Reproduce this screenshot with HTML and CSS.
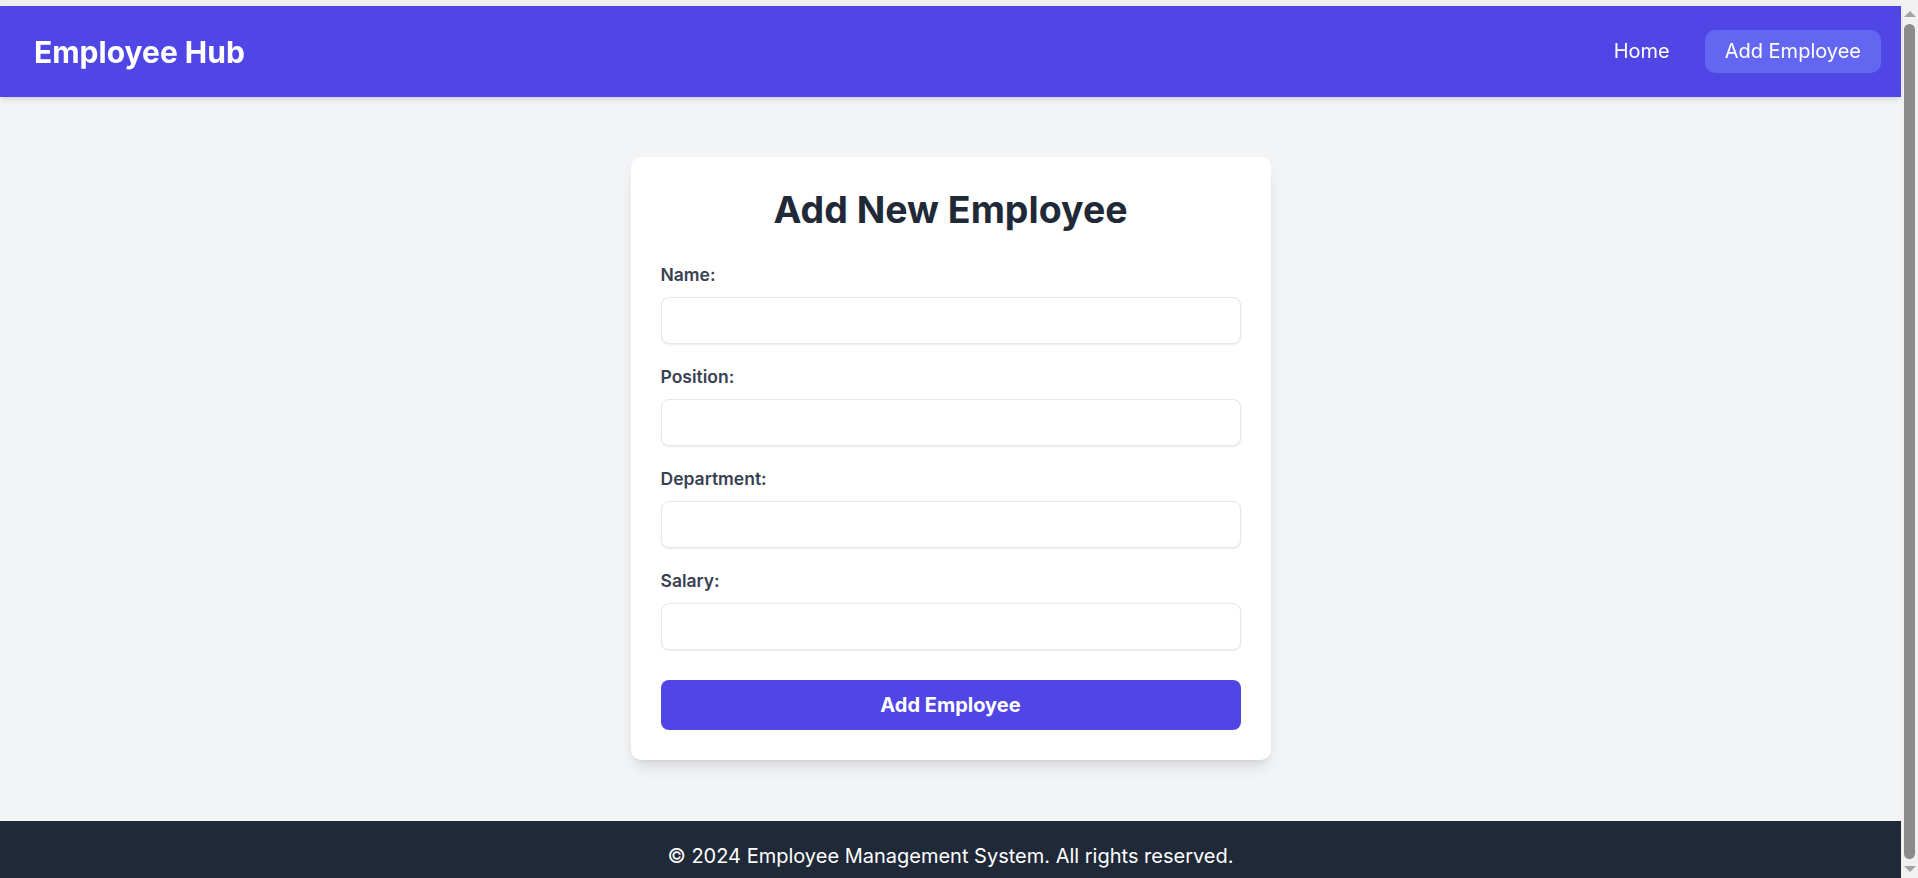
FILE: index.html
```html
<!DOCTYPE html>
<html lang="en">
<head>
<meta charset="utf-8">
<title>Employee Hub</title>
<link rel="stylesheet" href="styles.css">
</head>
<body>
<div class="top-strip"></div>
<header class="site-header">
  <div class="logo">Employee Hub</div>
  <nav class="nav">
    <a class="nav-link" href="#">Home</a>
    <a class="nav-link nav-active" href="#">Add Employee</a>
  </nav>
</header>
<main class="main">
  <section class="card">
    <h1 class="card-title">Add New Employee</h1>
    <form class="form">
      <div class="field">
        <label class="field-label" for="name">Name:</label>
        <input class="field-input" id="name" type="text">
      </div>
      <div class="field">
        <label class="field-label" for="position">Position:</label>
        <input class="field-input" id="position" type="text">
      </div>
      <div class="field">
        <label class="field-label" for="department">Department:</label>
        <input class="field-input" id="department" type="text">
      </div>
      <div class="field">
        <label class="field-label" for="salary">Salary:</label>
        <input class="field-input" id="salary" type="number">
      </div>
      <button class="submit-btn" type="button">Add Employee</button>
    </form>
  </section>
</main>
<footer class="site-footer">
  <p class="footer-text">© 2024 Employee Management System. All rights reserved.</p>
</footer>
<div class="fake-scrollbar" aria-hidden="true">
  <span class="sb-arrow sb-up"></span>
  <span class="sb-thumb"></span>
  <span class="sb-arrow sb-down"></span>
</div>
</body>
</html>
```

FILE: styles.css
```css
* {
  box-sizing: border-box;
}

html, body {
  margin: 0;
  padding: 0;
}

body {
  background: #f3f4f6;
  font-family: Inter, "Noto Sans", "Liberation Sans", sans-serif;
  color: #1f2937;
  padding-right: 17px;
}

.top-strip {
  height: 6px;
  background: #eeeff3;
}

.site-header {
  height: 91px;
  background: #4f46e5;
  display: flex;
  align-items: center;
  justify-content: space-between;
  padding: 0 20px 0 34px;
  box-shadow: 0 4px 6px -1px rgba(0, 0, 0, 0.1), 0 2px 4px -2px rgba(0, 0, 0, 0.1);
  position: relative;
  z-index: 1;
}

.logo {
  color: #ffffff;
  font-size: 30px;
  font-weight: 700;
  line-height: 40px;
}

.nav {
  display: flex;
  align-items: center;
  gap: 15px;
}

.nav-link {
  color: #ffffff;
  text-decoration: none;
  font-size: 20px;
  line-height: 23px;
  padding: 10px 20px;
  border-radius: 10px;
}

.nav-active {
  background: #6366f1;
}

.main {
  padding: 60px 0 61px;
  display: flex;
  justify-content: center;
}

.card {
  width: 640px;
  background: #ffffff;
  border-radius: 10px;
  padding: 30px;
  box-shadow: 0 10px 15px -3px rgba(0, 0, 0, 0.1), 0 4px 6px -4px rgba(0, 0, 0, 0.1);
}

.card-title {
  margin: 0 0 30px;
  text-align: center;
  font-size: 37.5px;
  line-height: 45px;
  font-weight: 700;
  color: #1f2937;
}

.form {
  display: flex;
  flex-direction: column;
}

.field {
  display: flex;
  flex-direction: column;
  margin-bottom: 20px;
}

.field-label {
  font-size: 17.5px;
  line-height: 25px;
  font-weight: 600;
  color: #374151;
  margin-bottom: 10px;
}

.field-input {
  height: 47px;
  border: 1px solid #e5e7eb;
  border-radius: 8px;
  background: #ffffff;
  box-shadow: 0 1px 2px 0 rgba(0, 0, 0, 0.08);
  font-family: inherit;
  font-size: 20px;
  padding: 0 12px;
  outline: none;
}

.submit-btn {
  margin-top: 10px;
  height: 50px;
  border: none;
  border-radius: 8px;
  background: #4f46e5;
  color: #ffffff;
  font-family: inherit;
  font-size: 20px;
  font-weight: 700;
  cursor: pointer;
}

.site-footer {
  background: #1f2937;
  padding: 20px 0;
  text-align: center;
}

.footer-text {
  margin: 0;
  color: #ffffff;
  font-size: 20px;
  line-height: 30px;
}

/* imitation of the browser's classic vertical scrollbar */
.fake-scrollbar {
  position: fixed;
  top: 0;
  right: 0;
  bottom: 0;
  width: 17px;
  background: #f1f1f1;
  display: flex;
  flex-direction: column;
  align-items: center;
  padding: 4px 0;
}

.sb-arrow {
  width: 0;
  height: 0;
  border-left: 6px solid transparent;
  border-right: 6px solid transparent;
  flex: none;
}

.sb-up {
  border-bottom: 6px solid #a3a3a3;
  margin: 7px 0 7px;
}

.sb-down {
  border-top: 6px solid #a3a3a3;
  margin: 7px 0 2px;
}

.sb-thumb {
  flex: 1;
  width: 11px;
  border-radius: 6px;
  background: #8b8b8b;
}
```
